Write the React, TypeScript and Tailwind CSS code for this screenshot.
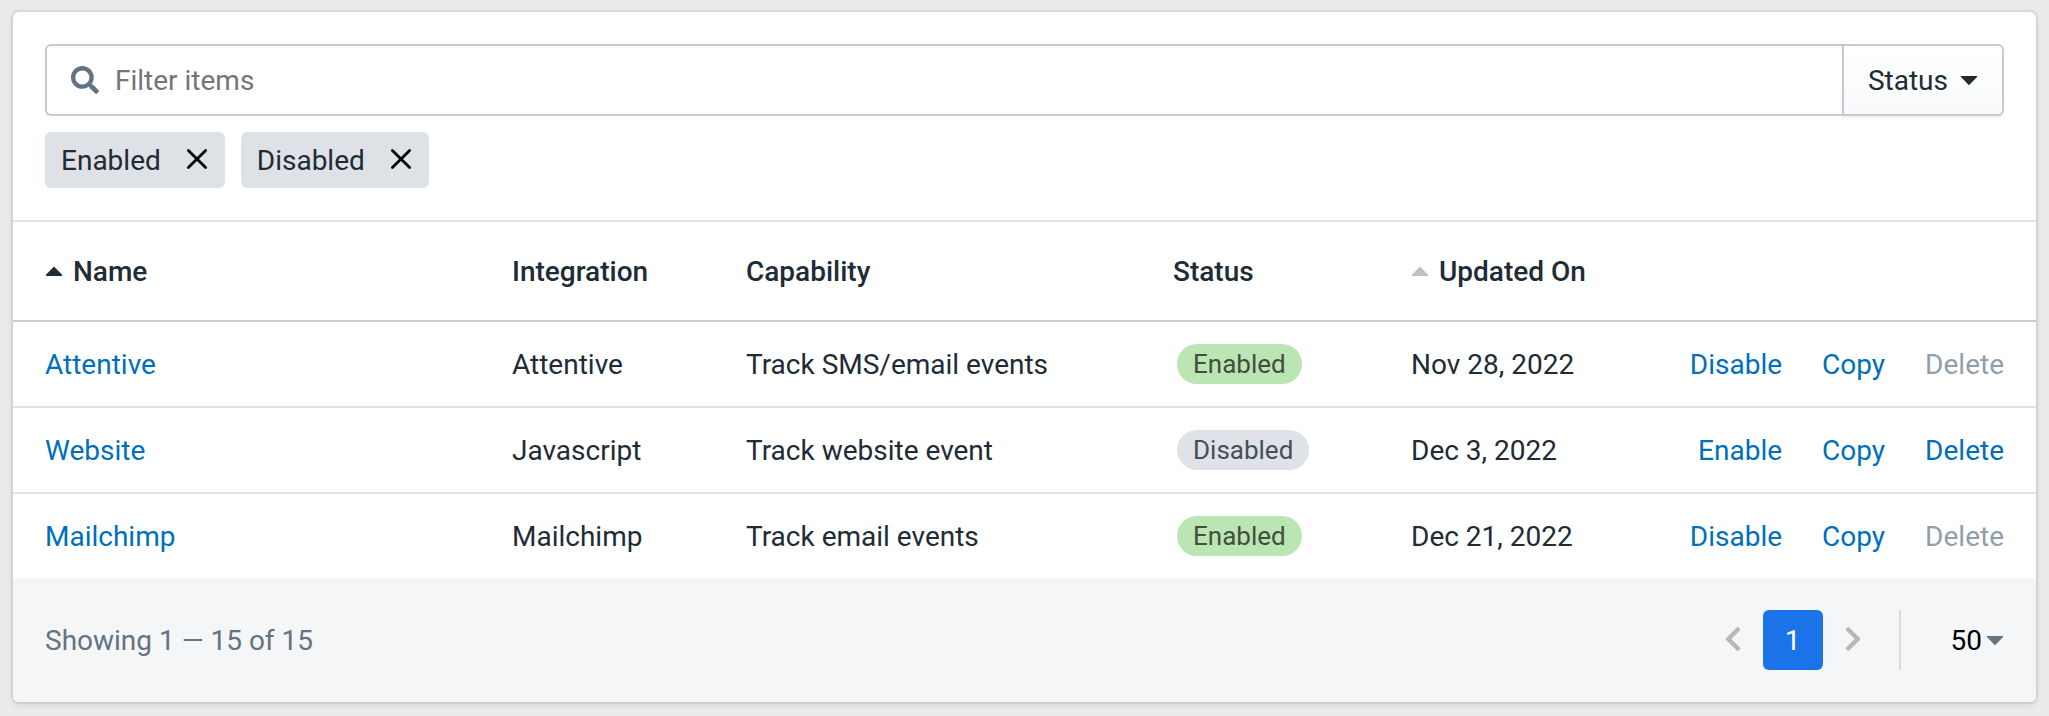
import { useState } from "react"
import { FaChevronLeft, FaChevronRight, FaSearch } from "react-icons/fa"

type Connection = {
  name: string
  integration: string
  capability: string
  enabled: boolean
  updatedOn: string
}

const connections: Connection[] = [
  {
    name: "Attentive",
    integration: "Attentive",
    capability: "Track SMS/email events",
    enabled: true,
    updatedOn: "Nov 28, 2022",
  },
  {
    name: "Website",
    integration: "Javascript",
    capability: "Track website event",
    enabled: false,
    updatedOn: "Dec 3, 2022",
  },
  {
    name: "Mailchimp",
    integration: "Mailchimp",
    capability: "Track email events",
    enabled: true,
    updatedOn: "Dec 21, 2022",
  },
]

function CaretUp({ className = "" }: { className?: string }) {
  return (
    <svg viewBox="0 0 18 28" className={`h-7 w-[18px] ${className}`} fill="currentColor">
      <path d="M9 9.5 17.3 18q.2.8-.6.9H1.3q-.8-.1-.6-.9z" />
    </svg>
  )
}

function CaretDown({ className = "" }: { className?: string }) {
  return (
    <svg viewBox="0 0 18 28" className={`h-7 w-[18px] ${className}`} fill="currentColor">
      <path d="M9 19.3.7 10.8q-.2-.8.6-.9h15.4q.8.1.6.9z" />
    </svg>
  )
}

function Chip({ label, onRemove }: { label: string; onRemove: () => void }) {
  return (
    <li className="flex h-14 items-center gap-6 rounded-md bg-[#dee1e5] px-4">
      <span>{label}</span>
      <button type="button" aria-label={`Remove ${label}`} onClick={onRemove}>
        <svg
          viewBox="0 0 24 24"
          className="size-6 text-black"
          fill="none"
          stroke="currentColor"
          strokeWidth="2.8"
          strokeLinecap="round"
        >
          <path d="M3.4 2.4 20.6 19.6M20.6 2.4 3.4 19.6" />
        </svg>
      </button>
    </li>
  )
}

function StatusBadge({ enabled }: { enabled: boolean }) {
  return (
    <span
      className={`ml-1 flex h-10 w-fit items-center rounded-full px-4 text-[26px] ${
        enabled ? "bg-[#bbe5b3] text-[#414f3e]" : "bg-[#dfe3e8] text-[#454f5b]"
      }`}
    >
      {enabled ? "Enabled" : "Disabled"}
    </span>
  )
}

export default function App() {
  const [query, setQuery] = useState("")
  const [filters, setFilters] = useState(["Enabled", "Disabled"])
  const [pageSize, setPageSize] = useState("50")

  const rows = connections.filter((c) =>
    c.name.toLowerCase().includes(query.toLowerCase())
  )

  return (
    <div className="min-h-screen bg-[#ebebeb] p-3 pb-3.5 font-['Roboto',sans-serif] text-[28px] leading-[41px] text-[#212b36]">
      <main className="mr-px ml-px overflow-hidden rounded-md bg-white shadow-[0_0_0_2px_rgba(63,63,68,0.08),0_2px_6px_0_rgba(63,63,68,0.15)]">
        {/* Filters */}
        <section className="border-b-2 border-[#dfe3e8] p-8">
          <div className="flex h-[72px]">
            <label className="flex grow items-center gap-4 rounded-l-md border-2 border-r-0 border-[#c3cbd6] pl-6 shadow-[inset_0_2px_0_0_rgba(99,115,129,0.05)]">
              <FaSearch className="size-7 text-[#637381]" />
              <input
                type="text"
                aria-label="Filter items"
                placeholder="Filter items"
                value={query}
                onChange={(e) => setQuery(e.target.value)}
                className="min-w-0 grow bg-transparent outline-none placeholder:text-[#757575]"
              />
            </label>
            <button
              type="button"
              className="flex items-center gap-3 rounded-r-md border-2 border-[#c3cbd6] bg-linear-to-b from-white to-[#f9fafb] px-6 shadow-[0_2px_0_0_rgba(22,29,37,0.05)]"
            >
              Status
              <CaretDown />
            </button>
          </div>
          <ul className="mt-4 flex gap-4">
            {filters.map((f) => (
              <Chip
                key={f}
                label={f}
                onRemove={() => setFilters(filters.filter((x) => x !== f))}
              />
            ))}
          </ul>
        </section>

        {/* Table */}
        <table className="w-full table-fixed text-left">
          <colgroup>
            <col />
            <col className="w-[234px]" />
            <col className="w-[427px]" />
            <col className="w-[238px]" />
            <col className="w-[265px]" />
            <col className="w-[376px]" />
          </colgroup>
          <thead>
            <tr className="h-[99px] border-b-2 border-[#c3cbd6]">
              <th className="px-4 pl-8 font-medium">
                <button type="button" className="flex items-center gap-2.5">
                  <CaretUp />
                  Name
                </button>
              </th>
              <th className="px-4 font-medium">Integration</th>
              <th className="px-4 font-medium">Capability</th>
              <th className="px-4 font-medium">Status</th>
              <th className="px-4 font-medium">
                <button type="button" className="flex items-center gap-2.5">
                  <CaretUp className="text-[#bcbfc3]" />
                  Updated On
                </button>
              </th>
              <td />
            </tr>
          </thead>
          <tbody>
            {rows.map((c) => (
              <tr key={c.name} className="h-[86px] border-b-2 border-[#dfe3e8] last:h-[85px] last:border-b-0">
                <td className="px-4 pl-8">
                  <a href="#" className="text-[#006fbb]">
                    {c.name}
                  </a>
                </td>
                <td className="px-4">{c.integration}</td>
                <td className="px-4">{c.capability}</td>
                <td className="px-4">
                  <StatusBadge enabled={c.enabled} />
                </td>
                <td className="px-4">{c.updatedOn}</td>
                <td className="pr-8">
                  <div className="flex justify-end gap-10 text-[#006fbb]">
                    <button type="button">{c.enabled ? "Disable" : "Enable"}</button>
                    <button type="button">Copy</button>
                    <button type="button" disabled={c.enabled} className="disabled:text-[#919eab]">
                      Delete
                    </button>
                  </div>
                </td>
              </tr>
            ))}
          </tbody>
        </table>

        {/* Pagination */}
        <footer className="flex items-center justify-between bg-[#f4f6f8] p-8">
          <p className="text-[#637381]">Showing 1 — 15 of 15</p>
          <div className="flex h-[60px] items-center">
            <nav aria-label="Pagination" className="flex items-center text-[#b5b7b9]">
              <button type="button" aria-label="Previous page" className="flex w-[60px] justify-center pb-0.5">
                <FaChevronLeft className="h-7 w-[18px]" />
              </button>
              <button type="button" aria-current="page" className="size-[60px] rounded-md bg-[#1a73e8] text-white">
                1
              </button>
              <button type="button" aria-label="Next page" className="flex w-[60px] justify-center pb-0.5">
                <FaChevronRight className="h-7 w-[18px]" />
              </button>
            </nav>
            <div className="ml-4 flex h-full items-center border-l-2 border-[#d9dbdd] pl-[50px]">
              <select
                aria-label="Items per page"
                value={pageSize}
                onChange={(e) => setPageSize(e.target.value)}
                className="field-sizing-content appearance-none text-black outline-none"
              >
                <option>25</option>
                <option>50</option>
              </select>
              <CaretDown className="pointer-events-none ml-1 text-[#637381]" />
            </div>
          </div>
        </footer>
      </main>
    </div>
  )
}
